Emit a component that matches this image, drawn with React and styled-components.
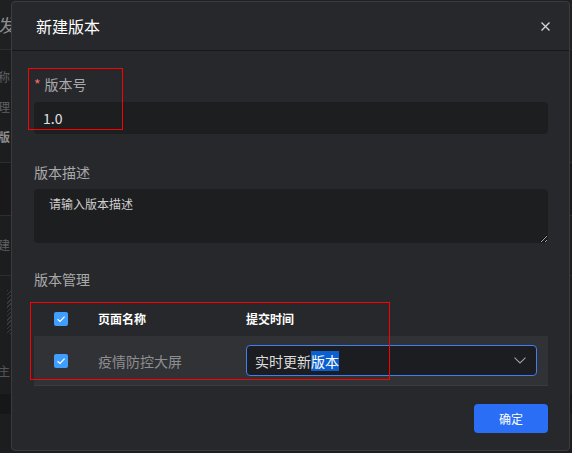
import React from "react";
import styled, { createGlobalStyle } from "styled-components";

const GlobalStyle = createGlobalStyle`
  body {
    margin: 0;
    background: #1c1d1f;
    font-family: "Noto Sans CJK SC", "Noto Sans", sans-serif;
  }
`;

function CheckBox() {
  return (
    <CheckBoxBox>
      <svg width="10" height="8" viewBox="0 0 10 8">
        <path d="M1.5 4.2 L4 6.4 L8.6 1.6" fill="none" stroke="#fff" strokeWidth="1.2" />
      </svg>
    </CheckBoxBox>
  );
}

function App() {
  return (
    <Page>
      <GlobalStyle />
      <Backdrop>
        <BackTop>
          <BackTitle>发布</BackTitle>
        </BackTop>
        <BackInfo>
          <BackText>称</BackText>
          <BackText>理</BackText>
          <BackText className="strong">版</BackText>
        </BackInfo>
        <BackBand />
        <BackInfo className="short">
          <BackText>建</BackText>
        </BackInfo>
        <BackStripe />
        <BackText className="small">主</BackText>
        <BackDark />
      </Backdrop>

      <Dialog>
        <HeadSection>
          <Title>新建版本</Title>
          <CloseIcon>
            <svg width="9" height="9" viewBox="0 0 9 9">
              <path d="M0.5 0.5 L8.5 8.5 M8.5 0.5 L0.5 8.5" stroke="#d6d6d6" strokeWidth="1.3" />
            </svg>
          </CloseIcon>
        </HeadSection>

        <FormSection>
          <Label>
            <Star>*</Star>版本号
          </Label>
          <Input>1.0</Input>

          <Label className="spaced">版本描述</Label>
          <TextArea placeholder="请输入版本描述" />

          <Label className="manage">版本管理</Label>
          <Table>
            <HeadRow>
              <Cell className="check">
                <CheckBox />
              </Cell>
              <HeadCell>页面名称</HeadCell>
              <HeadCell>提交时间</HeadCell>
            </HeadRow>
            <DataRow>
              <Cell className="check">
                <CheckBox />
              </Cell>
              <NameCell>疫情防控大屏</NameCell>
              <Cell>
                <Select>
                  <SelectText>
                    实时更新<Selected>版本</Selected>
                  </SelectText>
                  <svg width="12" height="7" viewBox="0 0 12 7">
                    <path d="M0.5 0.7 L6 6 L11.5 0.7" fill="none" stroke="#a0a0a0" strokeWidth="1.1" />
                  </svg>
                </Select>
              </Cell>
            </DataRow>
          </Table>
        </FormSection>

        <ButtonSection>
          <Button>确定</Button>
        </ButtonSection>
      </Dialog>

      <Marker style={{ left: 28, top: 68, width: 95, height: 62 }} />
      <Marker style={{ left: 30, top: 302, width: 360, height: 78 }} />
    </Page>
  );
}

export default App;

const Page = styled.div`
  position: relative;
  width: 572px;
  height: 453px;
  overflow: hidden;
  background: #1c1d1f;
`;

const Backdrop = styled.div`
  display: flex;
  flex-direction: column;
  width: 100%;
  height: 100%;
`;

const BackTop = styled.div`
  height: 49px;
  display: flex;
  align-items: center;
  border-bottom: 1px solid #2c2d30;
  background: #1f2022;
`;

const BackTitle = styled.span`
  margin-left: -1px;
  font-size: 17px;
  color: #8e8e8e;
`;

const BackInfo = styled.div`
  height: 113px;
  display: flex;
  flex-direction: column;
  gap: 12px;
  padding-top: 18px;
  box-sizing: border-box;
  border-bottom: 1px solid #2c2d30;
  &.short {
    height: 60px;
    padding-top: 20px;
  }
`;

const BackText = styled.span`
  display: block;
  margin-left: -2px;
  font-size: 12px;
  line-height: 18px;
  color: #5f6063;
  &.strong {
    font-weight: 700;
    color: #8a8b8e;
  }
  &.small {
    margin-top: 28px;
    color: #55565a;
  }
`;

const BackBand = styled.div`
  height: 52px;
  background: #19191b;
  border-bottom: 1px solid #2c2d30;
`;

const BackStripe = styled.div`
  margin: 14px 0 0 7px;
  width: 4px;
  height: 44px;
  background: repeating-linear-gradient(135deg, #3a3b3e 0 1px, #1c1d1f 1px 3px);
`;

const BackDark = styled.div`
  margin-top: 14px;
  height: 20px;
  background: #161718;
`;

const Dialog = styled.div`
  position: absolute;
  left: 11px;
  top: 1px;
  width: 559px;
  height: 450px;
  box-sizing: border-box;
  display: flex;
  flex-direction: column;
  background: #27282b;
  border: 1px solid #3a3b3e;
  border-radius: 4px;
`;

const HeadSection = styled.div`
  height: 49px;
  box-sizing: border-box;
  display: flex;
  justify-content: space-between;
  align-items: center;
  padding: 0 19px 0 24px;
  border-bottom: 1px solid #17181a;
`;

const Title = styled.span`
  font-size: 16px;
  color: #ffffff;
`;

const CloseIcon = styled.span`
  display: flex;
  cursor: pointer;
`;

const FormSection = styled.div`
  display: flex;
  flex-direction: column;
  padding: 23px 21px 0 22px;
`;

const Label = styled.div`
  font-size: 14px;
  line-height: 20px;
  color: #a9a9ab;
  margin-bottom: 8px;
  &.spaced {
    margin-top: 28px;
    margin-bottom: 7px;
  }
  &.manage {
    margin-top: 26px;
    margin-bottom: 12px;
  }
`;

const Star = styled.span`
  color: #f56c6c;
  margin-right: 4px;
`;

const Input = styled.div`
  height: 31px;
  display: flex;
  align-items: center;
  padding: 0 0 1px 9px;
  background: #1d1e20;
  border-radius: 4px;
  font-size: 14px;
  color: #e2e2e2;
`;

const TextArea = styled.textarea`
  height: 54px;
  box-sizing: border-box;
  padding: 6px 15px;
  background: #1d1e20;
  border: none;
  border-radius: 4px;
  outline: none;
  color-scheme: dark;
  font-family: "Noto Sans CJK SC", "Noto Sans", sans-serif;
  font-size: 12px;
  color: #d6d6d6;
  &::placeholder {
    color: #cfcfcf;
  }
`;

const Table = styled.div`
  display: flex;
  flex-direction: column;
`;

const HeadRow = styled.div`
  display: grid;
  grid-template-columns: 64px 148px 1fr;
  align-items: center;
  height: 35px;
  padding-right: 11px;
`;

const DataRow = styled(HeadRow)`
  height: 49px;
  background: #313235;
  border-bottom: 1px solid #3a3b3e;
`;

const Cell = styled.div`
  display: flex;
  align-items: center;
  &.check {
    padding-left: 20px;
  }
`;

const HeadCell = styled.div`
  font-size: 12px;
  font-weight: 700;
  color: #ffffff;
`;

const NameCell = styled.div`
  font-size: 14px;
  color: #8d8e90;
`;

const CheckBoxBox = styled.span`
  width: 14px;
  height: 14px;
  border-radius: 2px;
  background: #409eff;
  display: flex;
  align-items: center;
  justify-content: center;
`;

const Select = styled.div`
  flex: 1;
  height: 31px;
  box-sizing: border-box;
  display: flex;
  align-items: center;
  justify-content: space-between;
  padding: 0 10px 0 8px;
  background: #1c1d20;
  border: 1px solid #3f7ff0;
  border-radius: 4px;
`;

const SelectText = styled.span`
  font-size: 14px;
  line-height: 18px;
  color: #dcdcdc;
`;

const Selected = styled.span`
  background: #0b5fd0;
  color: #ffffff;
`;

const ButtonSection = styled.div`
  display: flex;
  justify-content: flex-end;
  padding: 18px 21px 0 0;
`;

const Button = styled.button`
  width: 74px;
  height: 29px;
  border: none;
  border-radius: 4px;
  background: #2a6ef6;
  color: #ffffff;
  font-family: "Noto Sans CJK SC", "Noto Sans", sans-serif;
  font-size: 12px;
  cursor: pointer;
`;

const Marker = styled.div`
  position: absolute;
  box-sizing: border-box;
  border: 1px solid #ff0000;
  pointer-events: none;
`;
